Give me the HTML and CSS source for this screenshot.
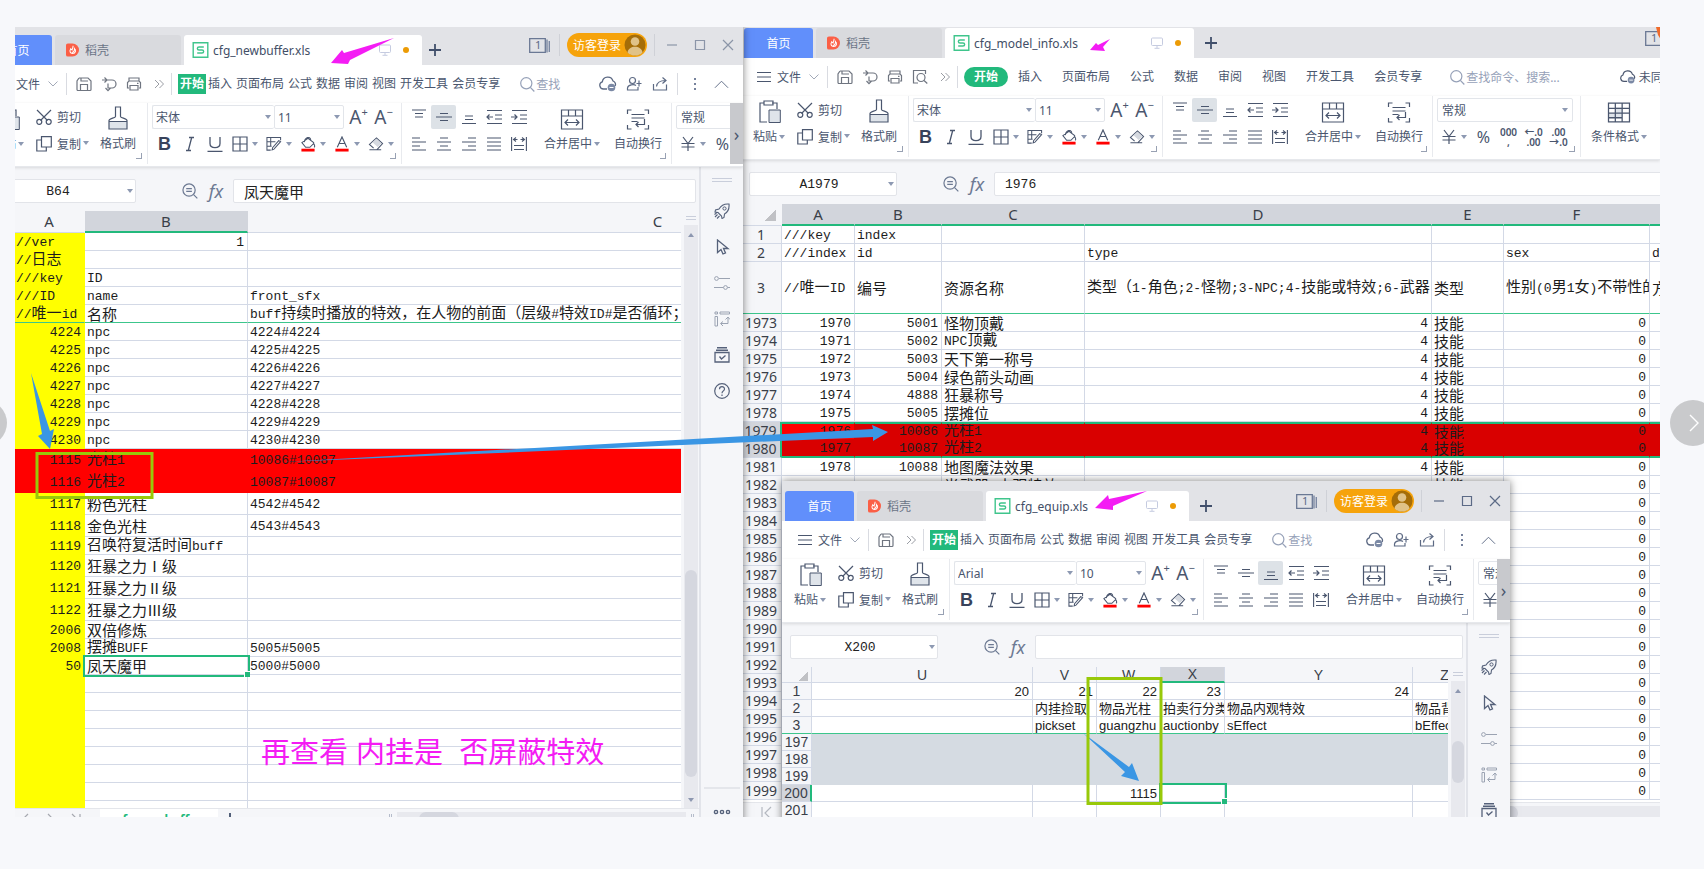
FILE: index.html
```html
<!DOCTYPE html>
<html lang="zh-CN">
<head>
<meta charset="utf-8">
<title>cfg_newbuffer.xls</title>
<link rel="stylesheet" href="styles.css">
</head>
<body>
<svg class="defs" aria-hidden="true">
  <symbol id="docer" viewBox="0 0 14 14"><path d="M0 2a2 2 0 0 1 2-2h5a7 7 0 0 1 0 14H2a2 2 0 0 1-2-2z" fill="#fb5f46"/><path d="M7.6 2.4c.2 2-.8 3-1 4.600-1-.4-1.500-1.300-1.500-1.300-1.700 2.500-.6 5 1.900 5 3.600 0 4.200-3.800 1.800-5.300M6.500 9.800C9 9 9.500 7 8.900 4.500" fill="none" stroke="#fff" stroke-width="1.100"/></symbol>
  <symbol id="sheet" viewBox="0 0 16 16"><path d="M.7.7h14.600v14.600H.7zM11.300 5H6.500C4.300 5 4.300 8 6.500 8h3c2.200 0 2.200 3 0 3H4.700" fill="none" stroke="#3fc58c" stroke-width="1.400"/></symbol>
  <symbol id="screen" viewBox="0 0 12 12"><path d="M1.500 1h9a1 1 0 0 1 1 1v5.500a1 1 0 0 1-1 1h-9a1 1 0 0 1-1-1V2a1 1 0 0 1 1-1zM6 8.500V11M3.500 11.300h5" fill="none" stroke="#c5cbe0"/></symbol>
  <symbol id="plus" viewBox="0 0 12 12"><path d="M6 0v12M0 6h12" fill="none" stroke="#414f6b" stroke-width="1.800"/></symbol>
  <symbol id="stack" viewBox="0 0 21 15"><path d="M.7.700h15.600v13.600H.7z" fill="none" stroke="#6a7894" stroke-width="1.300"/><path d="M18 1.500v13M20.300 3v11" stroke="#7c89a3" stroke-width="1.400"/></symbol>
  <symbol id="avatar" viewBox="0 0 22 22"><circle cx="11" cy="11" r="10.500" fill="#a56d08"/><circle cx="11" cy="7.500" r="4.300" fill="#e0c288"/><path d="M3.500 18.400C4.500 10.800 17.500 10.800 18.500 18.400a10.500 10.500 0 0 1-15 0z" fill="#e0c288"/></symbol>
  <symbol id="min" viewBox="0 0 12 12"><path d="M1 6h10" stroke="currentColor" stroke-width="1.200"/></symbol>
  <symbol id="max" viewBox="0 0 12 12"><path d="M1.500 1.500h9v9h-9z" fill="none" stroke="currentColor" stroke-width="1.200"/></symbol>
  <symbol id="close" viewBox="0 0 12 12"><path d="M1 1l10 10M11 1L1 11" stroke="currentColor" stroke-width="1.200"/></symbol>
  <symbol id="menu" viewBox="0 0 14 12"><path d="M0 1.500h14M0 6h14M0 10.500h14" stroke="currentColor" stroke-width="1.100"/></symbol>
  <symbol id="down" viewBox="0 0 10 6"><path d="M.5.500L5 5 9.500.500" fill="none" stroke="currentColor"/></symbol>
  <symbol id="save" viewBox="0 0 16 16"><path d="M3 2h9l3 3v8.500a1 1 0 0 1-1 1H2a1 1 0 0 1-1-1V5l2-3M5 2v3h7M4.500 14.500V8.500h7v6" fill="none" stroke="currentColor" stroke-width="1.200"/></symbol>
  <symbol id="undo" viewBox="0 0 16 16"><path d="M1 4h10a4 4 0 0 1 0 8H7V7.500M3.500 1.500L6 4 3.500 6.500M4.500 12l2.500 2.700L9.500 12" fill="none" stroke="currentColor" stroke-width="1.200"/></symbol>
  <symbol id="print" viewBox="0 0 16 16"><path d="M3 5V2h10v3M3 12H1.500V6.500L3 5h10l1.500 1.500V12H13M4 9.500h8V14H4zM11 7.300h1.500" fill="none" stroke="currentColor" stroke-width="1.200"/></symbol>
  <symbol id="preview" viewBox="0 0 16 16"><path d="M6 14H1.500V1.500h12V5" fill="none" stroke="currentColor" stroke-width="1.200"/><circle cx="9" cy="8.500" r="4" fill="none" stroke="currentColor" stroke-width="1.200"/><path d="M12 11.500l3.300 3" stroke="currentColor" stroke-width="1.200"/></symbol>
  <symbol id="more" viewBox="0 0 10 10"><path d="M1 1l4 4-4 4M5.500 1l4 4-4 4" fill="none" stroke="#9a9da4"/></symbol>
  <symbol id="search" viewBox="0 0 15 15"><circle cx="6.300" cy="6.300" r="5.600" fill="none" stroke="currentColor" stroke-width="1.200"/><path d="M10.300 10.300l4 4.200" stroke="currentColor" stroke-width="1.200"/></symbol>
  <symbol id="cloud" viewBox="0 0 18 16"><path d="M8 13H4.500A3.700 3.700 0 0 1 3.300 5.800 5.500 5.500 0 0 1 14 5c2.500 1 3 3.500 2 5" fill="none" stroke="currentColor" stroke-width="1.300"/><circle cx="12.500" cy="11.500" r="3.800" fill="#7b89a5"/><path d="M10.500 11.500h4" stroke="#fff"/></symbol>
  <symbol id="person" viewBox="0 0 16 16"><circle cx="6.500" cy="4.500" r="3" fill="none" stroke="currentColor" stroke-width="1.200"/><path d="M12 11v3H1.500v-2C2 8.500 8 8 10 9.500M13 4.500v6M10.500 7.500h5" fill="none" stroke="currentColor" stroke-width="1.200"/></symbol>
  <symbol id="share" viewBox="0 0 16 16"><path d="M1.500 8v6h13V8.500M4.500 10.500C5 6.500 8 4.500 13.500 4.500M10.500 1.500l3.500 3-3.500 3" fill="none" stroke="currentColor" stroke-width="1.200"/></symbol>
  <symbol id="dots" viewBox="0 0 4 14"><path d="M1 1h2v2H1zM1 6h2v2H1zM1 11h2v2H1z" fill="#76829c"/></symbol>
  <symbol id="up" viewBox="0 0 16 9"><path d="M1 8l7-7 7 7" fill="none" stroke="currentColor"/></symbol>
  <symbol id="paste" viewBox="0 0 22 24"><path d="M8 22H1V3h4M13 3h5v6M5 1h9v4H5z" fill="none" stroke="currentColor" stroke-width="1.200"/><path d="M10 10h11.300v12.500H10z" fill="#dfe4ea" stroke="currentColor"/></symbol>
  <symbol id="cut" viewBox="0 0 16 16"><path d="M1 1l10.500 10.500M15 1L4.500 11.500" stroke="currentColor" stroke-width="1.200"/><circle cx="3.300" cy="12.800" r="2.500" fill="none" stroke="currentColor" stroke-width="1.200"/><circle cx="12.700" cy="12.800" r="2.500" fill="none" stroke="currentColor" stroke-width="1.200"/></symbol>
  <symbol id="copy" viewBox="0 0 16 16"><path d="M5.500.700h9.800V11H5.500zM5.500 4H.8v11h9.500v-4" fill="none" stroke="currentColor" stroke-width="1.200"/></symbol>
  <symbol id="brush" viewBox="0 0 20 24"><path d="M1 15h18v8H1z" fill="#dfe4ea"/><path d="M1 23V14.500c0-2 6.500-2.500 6.500-4V1h5v9.500c0 1.500 6.500 2 6.500 4V23zM1 15.500h18" fill="none" stroke="currentColor" stroke-width="1.200"/></symbol>
  <symbol id="italic" viewBox="0 0 16 16"><path d="M7 1.500h5M4 14.500h5M9.700 1.500L6.300 14.500" stroke="currentColor" stroke-width="1.300"/></symbol>
  <symbol id="under" viewBox="0 0 16 16"><path d="M3 1v6.500c0 5.500 10 5.500 10 0V1M.5 15.300h15" fill="none" stroke="currentColor" stroke-width="1.300"/></symbol>
  <symbol id="border" viewBox="0 0 16 16"><path d="M1 1h14v14H1zM8 1v14M1 8h14" fill="none" stroke="currentColor" stroke-width="1.200"/></symbol>
  <symbol id="pen" viewBox="0 0 17 16"><path d="M5 14.500H1V1h14.500v3M1 5.500h9M5 1v9.500M1 10.500h5M15.500 5.500l-7 8-2 .700.500-2.200 6.500-7.500z" fill="none" stroke="currentColor" stroke-width="1.100"/></symbol>
  <symbol id="bucket" viewBox="0 0 16 17"><path d="M4 6.500C5 1 10 0 11 4M1.500 7L8 2.500 14 7v1L10 12H5.500zM14 8c1.500 2 1.500 3 .5 4" fill="none" stroke="currentColor" stroke-width="1.100"/><path d="M1 13.500h14v3H1z" fill="#f00"/></symbol>
  <symbol id="fontcolor" viewBox="0 0 16 17"><path d="M3 12L8 1l5 11M4.800 8h6.400" fill="none" stroke="currentColor" stroke-width="1.200"/><path d="M1 13.500h14v3H1z" fill="#f00"/></symbol>
  <symbol id="eraser" viewBox="0 0 17 16"><path d="M6 12.500L1.500 8.500 9 1.500l6.500 6-6 6.500H1.500M9 14h5" fill="none" stroke="currentColor" stroke-width="1.100"/><path d="M9 2.500l5.300 5-4 3.800L5 6.500z" fill="#d5d9e0"/></symbol>
  <symbol id="vtop" viewBox="0 0 16 16"><path d="M1 1h14M4 4.500h8M4 8h8" stroke="currentColor" stroke-width="1.200"/></symbol>
  <symbol id="vmid" viewBox="0 0 16 16"><path d="M4 4.500h8M0 8h16M4 11.500h8" stroke="currentColor" stroke-width="1.200"/></symbol>
  <symbol id="vbot" viewBox="0 0 16 16"><path d="M4 7h8M4 10.500h8M1 14.500h14" stroke="currentColor" stroke-width="1.200"/></symbol>
  <symbol id="outd" viewBox="0 0 16 16"><path d="M1 1.500h15M9 6h7M9 10h7M1 14.500h15M7 8H1M3.500 5.500L1 8l2.500 2.500" fill="none" stroke="currentColor" stroke-width="1.200"/></symbol>
  <symbol id="ind" viewBox="0 0 16 16"><path d="M1 1.500h15M9 6h7M9 10h7M1 14.500h15M0 8h6M3.500 5.500L6 8l-2.500 2.500" fill="none" stroke="currentColor" stroke-width="1.200"/></symbol>
  <symbol id="hl" viewBox="0 0 16 16"><path d="M1 2h8M1 6h14M1 10h8M1 14h14" stroke="currentColor" stroke-width="1.200"/></symbol>
  <symbol id="hc" viewBox="0 0 16 16"><path d="M4 2h8M1 6h14M4 10h8M1 14h14" stroke="currentColor" stroke-width="1.200"/></symbol>
  <symbol id="hr" viewBox="0 0 16 16"><path d="M7 2h8M1 6h14M7 10h8M1 14h14" stroke="currentColor" stroke-width="1.200"/></symbol>
  <symbol id="hj" viewBox="0 0 16 16"><path d="M1 2h14M1 6h14M1 10h14M1 14h14" stroke="currentColor" stroke-width="1.200"/></symbol>
  <symbol id="dist" viewBox="0 0 16 16"><path d="M.6 1v14M15.400 1v14M3 9.500h10M3 13.500h10M2.500 3.500h4M5 1.500l-2.500 2L5 5.500M13.500 3.500h-4M11 1.500l2.500 2-2.500 2" fill="none" stroke="currentColor" stroke-width="1.100"/></symbol>
  <symbol id="merge" viewBox="0 0 23 21"><path d="M1 1h21v19H1zM1 7h21M8 1v6M15 1v6M4.500 13.500h14M7.500 10.500l-3 3 3 3M15.500 10.500l3 3-3 3" fill="none" stroke="currentColor" stroke-width="1.200"/></symbol>
  <symbol id="wrap" viewBox="0 0 23 21"><path d="M5 1H1v4M18 1h4v4M1 16v4h4M22 16v4h-4M5 5.500h13M5 9h13M5 12.500h6M18 10v5.500H9.500M12 13l-2.500 2.500L12 18" fill="none" stroke="currentColor" stroke-width="1.200"/></symbol>
  <symbol id="cond" viewBox="0 0 22 20"><path d="M1 11h13v4H1zM8 5h6v6H8z" fill="#dfe4ea"/><path d="M1 1h20v18H1zM1 6h20M1 10.500h20M1 15h13M7.500 1v18M14 1v18" fill="none" stroke="currentColor" stroke-width="1.200"/></symbol>
  <symbol id="yen" viewBox="0 0 16 16"><path d="M3 1l5 6.500L13 1M8 7.500V15M1.500 7.500h13M1.500 11h13" fill="none" stroke="currentColor" stroke-width="1.200"/></symbol>
  <symbol id="zoomout" viewBox="0 0 17 17"><circle cx="7.500" cy="7.500" r="6.500" fill="none" stroke="currentColor" stroke-width="1.300"/><path d="M12.300 12.300l4 4M4.500 6h6M4.500 9h6" stroke="currentColor" stroke-width="1.300"/></symbol>
  <symbol id="rocket" viewBox="0 0 16 16"><path d="M15 1C10 .5 7 2.500 5 6L1.500 7 1 9l3 .5L7.500 13l.5 2.500 2-1 .5-3.500C14 9 15.500 6 15 1zM3.500 11.500L1 14M5.500 13L3 15.500M2.500 10L.5 11.500" fill="none" stroke="currentColor" stroke-width="1.100"/><circle cx="10.500" cy="5.500" r="1.600" fill="none" stroke="currentColor"/></symbol>
  <symbol id="cursor" viewBox="0 0 16 16"><path d="M3.500 1v12.500L7 10.500l2 4.500 2.500-1-2-4.500H14z" fill="none" stroke="currentColor" stroke-width="1.300"/></symbol>
  <symbol id="sliders" viewBox="0 0 16 16"><circle cx="2.500" cy="3.500" r="1.900" fill="none" stroke="currentColor"/><circle cx="11.500" cy="12.500" r="1.900" fill="none" stroke="currentColor"/><path d="M5 3.500h11M0 12.500h9.500M13.500 12.500H16" stroke="currentColor"/></symbol>
  <symbol id="swap" viewBox="0 0 16 16"><path d="M1 1h2.500v2H1zM6 1h9.500v2H6zM1 5.500h2.500V15H1zM7 12.500h7V6.500M11.500 8.500l2.500-2.500 2 2.500M9 10.500l-2.500 2L9 15" fill="none" stroke="currentColor"/></symbol>
  <symbol id="box" viewBox="0 0 16 16"><path d="M3 .8h10M2 3.300h12" stroke="currentColor" stroke-width="1.500"/><path d="M1 5.500h14V15H1zM5.500 9.500L7.500 12l4-3.500" fill="none" stroke="currentColor" stroke-width="1.300"/></symbol>
  <symbol id="help" viewBox="0 0 16 16"><circle cx="8" cy="8" r="7.300" fill="none" stroke="currentColor" stroke-width="1.200"/><path d="M5.500 6.200c0-3.400 5-3.400 5-.2 0 1.800-2.500 2-2.500 4.200M8 11.500V13" fill="none" stroke="currentColor" stroke-width="1.200"/></symbol>
</svg>

<main class="stage">

  <section class="window buffer" aria-label="cfg_newbuffer.xls">
    <header class="titlebar">
      <button class="tab home">首页</button>
      <button class="tab docer"><svg><use href="#docer"/></svg>稻壳</button>
      <div class="tab active"><svg class="i16"><use href="#sheet"/></svg><span>cfg_newbuffer.xls</span><svg class="scr"><use href="#screen"/></svg><i class="dot"></i></div>
      <button class="add" aria-label="新建"><svg><use href="#plus"/></svg></button>
      <div class="controls">
        <button class="count"><svg><use href="#stack"/></svg><span>1</span></button><i class="sep"></i>
        <button class="login">访客登录<svg><use href="#avatar"/></svg></button><i class="sep"></i>
        <button class="wc" aria-label="最小化"><svg><use href="#min"/></svg></button><button class="wc" aria-label="最大化"><svg><use href="#max"/></svg></button><button class="wc" aria-label="关闭"><svg><use href="#close"/></svg></button>
      </div>
    </header>
    <nav class="menu">
      <button class="file"><svg class="ham"><use href="#menu"/></svg>文件<svg class="chev"><use href="#down"/></svg></button><i class="sep"></i>
      <button class="q" aria-label="保存"><svg><use href="#save"/></svg></button><button class="q" aria-label="撤销"><svg><use href="#undo"/></svg></button><button class="q" aria-label="打印"><svg><use href="#print"/></svg></button><button class="q" aria-label="更多"><svg class="i10"><use href="#more"/></svg></button><i class="sep"></i>
      <div class="items"><button class="on">开始</button><button>插入</button><button>页面布局</button><button>公式</button><button>数据</button><button>审阅</button><button>视图</button><button>开发工具</button><button>会员专享</button></div>
      <button class="find"><svg><use href="#search"/></svg>查找</button>
      <div class="acts"><button aria-label="云"><svg class="i18"><use href="#cloud"/></svg></button><button aria-label="协作"><svg><use href="#person"/></svg></button><button aria-label="分享"><svg><use href="#share"/></svg></button><i class="sep"></i><button aria-label="选项"><svg><use href="#dots"/></svg></button><button aria-label="收起"><svg><use href="#up"/></svg></button></div>
    </nav>
    <div class="ribbon">
      <div class="groups">
        <div class="group clip">
          <button class="big"><svg class="pasteicon"><use href="#paste"/></svg><span class="dd">粘贴</span></button>
          <div class="col"><button class="lab"><svg><use href="#cut"/></svg>剪切</button><button class="lab"><svg><use href="#copy"/></svg><span class="dd">复制</span></button></div>
          <button class="big"><svg class="brushicon"><use href="#brush"/></svg><span>格式刷</span></button>
        </div>
        <div class="group font">
          <div class="line"><label class="combo face"><select aria-label="字体"><option>宋体</option></select></label><label class="combo size"><select aria-label="字号"><option>11</option></select></label><button class="t">A<sup>+</sup></button><button class="t">A<sup>−</sup></button></div>
          <div class="line"><button class="t bold">B</button><button class="t"><svg><use href="#italic"/></svg></button><button class="t"><svg><use href="#under"/></svg></button><button class="drop dd"><svg><use href="#border"/></svg></button><button class="drop dd"><svg><use href="#pen"/></svg></button><button class="drop dd"><svg><use href="#bucket"/></svg></button><button class="drop dd"><svg><use href="#fontcolor"/></svg></button><button class="drop dd"><svg><use href="#eraser"/></svg></button></div>
        </div>
        <div class="group align">
          <div class="pad"><button><svg><use href="#vtop"/></svg></button><button class="sel"><svg><use href="#vmid"/></svg></button><button><svg><use href="#vbot"/></svg></button><button><svg><use href="#outd"/></svg></button><button><svg><use href="#ind"/></svg></button><button><svg><use href="#hl"/></svg></button><button><svg><use href="#hc"/></svg></button><button><svg><use href="#hr"/></svg></button><button><svg><use href="#hj"/></svg></button><button><svg><use href="#dist"/></svg></button></div>
          <button class="big wide"><svg class="mergeicon"><use href="#merge"/></svg><span class="dd">合并居中</span></button>
          <button class="big wraptext"><svg class="mergeicon"><use href="#wrap"/></svg><span>自动换行</span></button>
        </div>
        <div class="group num">
          <div class="line"><label class="combo fmt"><select aria-label="数字格式"><option>常规</option></select></label></div>
          <div class="line"><button class="drop dd" aria-label="货币"><svg><use href="#yen"/></svg></button><button class="t pct">%</button></div>
        </div>
      </div>
      <button class="scroll" aria-label="更多功能">›</button>
    </div>
    <div class="body">
      <div class="work">
        <div class="fbar"><label class="namebox"><input aria-label="名称框" value="B64"></label><button aria-label="缩小"><svg><use href="#zoomout"/></svg></button><button class="fx">fx</button><input class="formula zh" aria-label="编辑栏" value="凤天魔甲"></div>
        <div class="gridrow">
          <div class="grid">
            <table>
              <colgroup><col class="a"><col class="b"><col class="c"></colgroup>
              <thead><tr><th>A</th><th class="hot">B</th><th>C</th></tr></thead>
              <tbody>
                <tr><td>//ver</td><td class="r">1</td><td></td></tr>
                <tr><td>//<span class="zh">日志</span></td><td></td><td></td></tr>
                <tr><td>///key</td><td>ID</td><td></td></tr>
                <tr><td>///ID</td><td>name</td><td>front_sfx</td></tr>
                <tr class="freeze"><td>//<span class="zh">唯一</span>id</td><td class="zh">名称</td><td>buff<span class="zh">持续时播放的特效，在人物的前面（层级</span>#<span class="zh">特效</span>ID#<span class="zh">是否循环；</span></td></tr>
                <tr><td class="r">4224</td><td>npc</td><td>4224#4224</td></tr>
                <tr><td class="r">4225</td><td>npc</td><td>4225#4225</td></tr>
                <tr><td class="r">4226</td><td>npc</td><td>4226#4226</td></tr>
                <tr><td class="r">4227</td><td>npc</td><td>4227#4227</td></tr>
                <tr><td class="r">4228</td><td>npc</td><td>4228#4228</td></tr>
                <tr><td class="r">4229</td><td>npc</td><td>4229#4229</td></tr>
                <tr><td class="r">4230</td><td>npc</td><td>4230#4230</td></tr>
                <tr class="tall red"><td class="r">1115</td><td><span class="zh">光柱</span>1</td><td>10086#10087</td></tr>
                <tr class="tall red"><td class="r">1116</td><td><span class="zh">光柱</span>2</td><td>10087#10087</td></tr>
                <tr class="tall"><td class="r">1117</td><td class="zh">粉色光柱</td><td>4542#4542</td></tr>
                <tr class="tall"><td class="r">1118</td><td class="zh">金色光柱</td><td>4543#4543</td></tr>
                <tr><td class="r">1119</td><td><span class="zh">召唤符复活时间</span>buff</td><td></td></tr>
                <tr class="tall"><td class="r">1120</td><td class="zh">狂暴之力Ⅰ级</td><td></td></tr>
                <tr class="tall"><td class="r">1121</td><td class="zh">狂暴之力Ⅱ级</td><td></td></tr>
                <tr class="tall"><td class="r">1122</td><td class="zh">狂暴之力Ⅲ级</td><td></td></tr>
                <tr><td class="r">2006</td><td class="zh">双倍修炼</td><td></td></tr>
                <tr><td class="r">2008</td><td><span class="zh">摆摊</span>BUFF</td><td>5005#5005</td></tr>
                <tr><td class="r">50</td><td class="zh cursor">凤天魔甲</td><td>5000#5000</td></tr>
                <tr><td></td><td></td><td></td></tr><tr><td></td><td></td><td></td></tr><tr><td></td><td></td><td></td></tr><tr><td></td><td></td><td></td></tr>
                <tr><td></td><td></td><td></td></tr><tr><td></td><td></td><td></td></tr><tr><td></td><td></td><td></td></tr><tr><td></td><td></td><td></td></tr>
              </tbody>
            </table>
          </div>
          <div class="vscroll"><i class="grip"></i><div class="track"><i class="arr"></i><i class="thumb"></i><i class="arr dn"></i></div></div>
        </div>
        <footer class="sheets"><span class="nav"><svg><path d="M9 5L4 10l5 5M29 5l5 5-5 5M53 5l5 5-5 5M61 5v10" fill="none" stroke="#a6a9b0" stroke-width="1.200"/></svg></span><button class="stab">cfg_newbuffer</button><button class="sadd"><svg><use href="#plus"/></svg></button><i class="split"></i><span class="htrack"><i></i></span><i class="split end"></i></footer>
      </div>
      <aside class="side"><i class="grip"></i><button><svg><use href="#rocket"/></svg></button><button><svg><use href="#cursor"/></svg></button><button class="dim"><svg><use href="#sliders"/></svg></button><button class="dim"><svg><use href="#swap"/></svg></button><button><svg><use href="#box"/></svg></button><button><svg><use href="#help"/></svg></button><button class="rest"><svg viewBox="0 0 18 16"><g fill="none" stroke="#55617a" stroke-width="1.400"><circle cx="3" cy="8" r="1.600"/><circle cx="9" cy="8" r="1.600"/><circle cx="15" cy="8" r="1.600"/></g></svg></button></aside>
    </div>
  </section>

  <section class="window model" aria-label="cfg_model_info.xls">
    <header class="titlebar">
      <button class="tab home">首页</button>
      <button class="tab docer"><svg><use href="#docer"/></svg>稻壳</button>
      <div class="tab active"><svg class="i16"><use href="#sheet"/></svg><span>cfg_model_info.xls</span><svg class="scr"><use href="#screen"/></svg><i class="dot"></i></div>
      <button class="add" aria-label="新建"><svg><use href="#plus"/></svg></button>
      <div class="controls"><button class="count"><svg><use href="#stack"/></svg><span>1</span></button></div>
      <svg class="flag"><path d="M0 0h5v13L2 8z" fill="#f06a2a"/></svg>
    </header>
    <nav class="menu">
      <button class="file"><svg class="ham"><use href="#menu"/></svg>文件<svg class="chev"><use href="#down"/></svg></button><i class="sep"></i>
      <button class="q" aria-label="保存"><svg><use href="#save"/></svg></button><button class="q" aria-label="撤销"><svg><use href="#undo"/></svg></button><button class="q" aria-label="打印"><svg><use href="#print"/></svg></button><button class="q" aria-label="预览"><svg><use href="#preview"/></svg></button><button class="q" aria-label="更多"><svg class="i10"><use href="#more"/></svg></button><i class="sep"></i>
      <div class="items"><button class="on">开始</button><button>插入</button><button>页面布局</button><button>公式</button><button>数据</button><button>审阅</button><button>视图</button><button>开发工具</button><button>会员专享</button></div>
      <button class="find"><svg><use href="#search"/></svg>查找命令、搜索...</button>
      <button class="sync"><svg><use href="#cloud"/></svg>未同步</button>
    </nav>
    <div class="ribbon">
      <div class="groups">
        <div class="group clip">
          <button class="big"><svg class="pasteicon"><use href="#paste"/></svg><span class="dd">粘贴</span></button>
          <div class="col"><button class="lab"><svg><use href="#cut"/></svg>剪切</button><button class="lab"><svg><use href="#copy"/></svg><span class="dd">复制</span></button></div>
          <button class="big"><svg class="brushicon"><use href="#brush"/></svg><span>格式刷</span></button>
        </div>
        <div class="group font">
          <div class="line"><label class="combo face"><select aria-label="字体"><option>宋体</option></select></label><label class="combo size"><select aria-label="字号"><option>11</option></select></label><button class="t">A<sup>+</sup></button><button class="t">A<sup>−</sup></button></div>
          <div class="line"><button class="t bold">B</button><button class="t"><svg><use href="#italic"/></svg></button><button class="t"><svg><use href="#under"/></svg></button><button class="drop dd"><svg><use href="#border"/></svg></button><button class="drop dd"><svg><use href="#pen"/></svg></button><button class="drop dd"><svg><use href="#bucket"/></svg></button><button class="drop dd"><svg><use href="#fontcolor"/></svg></button><button class="drop dd"><svg><use href="#eraser"/></svg></button></div>
        </div>
        <div class="group align">
          <div class="pad"><button><svg><use href="#vtop"/></svg></button><button class="sel"><svg><use href="#vmid"/></svg></button><button><svg><use href="#vbot"/></svg></button><button><svg><use href="#outd"/></svg></button><button><svg><use href="#ind"/></svg></button><button><svg><use href="#hl"/></svg></button><button><svg><use href="#hc"/></svg></button><button><svg><use href="#hr"/></svg></button><button><svg><use href="#hj"/></svg></button><button><svg><use href="#dist"/></svg></button></div>
          <button class="big wide"><svg class="mergeicon"><use href="#merge"/></svg><span class="dd">合并居中</span></button>
          <button class="big wraptext"><svg class="mergeicon"><use href="#wrap"/></svg><span>自动换行</span></button>
        </div>
        <div class="group num">
          <div class="line"><label class="combo fmt"><select aria-label="数字格式"><option>常规</option></select></label></div>
          <div class="line"><button class="drop dd" aria-label="货币"><svg><use href="#yen"/></svg></button><button class="t pct">%</button><button class="digits">000<br>,</button><button class="digits">←.0<br>.00</button><button class="digits">.00<br>→.0</button></div>
        </div>
        <div class="group cond">
          <button class="big wide"><svg class="mergeicon"><use href="#cond"/></svg><span class="dd">条件格式</span></button>
          <div class="col"><button class="lab"><svg><use href="#border"/></svg></button><button class="lab"><svg><use href="#hj"/></svg></button></div>
        </div>
      </div>
    </div>
    <div class="body">
      <div class="work">
        <div class="fbar"><label class="namebox"><input aria-label="名称框" value="A1979"></label><button aria-label="缩小"><svg><use href="#zoomout"/></svg></button><button class="fx">fx</button><input class="formula" aria-label="编辑栏" value="1976"></div>
        <div class="gridrow"><div class="grid">
          <table>
            <colgroup><col class="n"><col class="a"><col class="b"><col class="c"><col class="d"><col class="e"><col class="f"><col class="g"></colgroup>
            <thead><tr><th class="corner"></th><th>A</th><th>B</th><th>C</th><th>D</th><th>E</th><th>F</th><th></th></tr></thead>
            <tbody>
              <tr><th>1</th><td>///key</td><td>index</td><td></td><td></td><td></td><td></td><td></td></tr>
              <tr><th>2</th><td>///index</td><td>id</td><td></td><td>type</td><td></td><td>sex</td><td>d</td></tr>
              <tr class="freeze head3"><th>3</th><td>//<span class="zh">唯一</span>ID</td><td class="zh">编号</td><td class="zh">资源名称</td><td><span class="zh">类型（</span>1-<span class="zh">角色</span>;2-<span class="zh">怪物</span>;3-NPC;4-<span class="zh">技能或特效</span>;6-<span class="zh">武器</span></td><td class="zh">类型</td><td><span class="zh">性别</span>(0<span class="zh">男</span>1<span class="zh">女</span>)<span class="zh">不带性的</span></td><td class="zh">方</td></tr>
              <tr><th>1973</th><td class="r">1970</td><td class="r">5001</td><td class="zh">怪物顶戴</td><td class="r">4</td><td class="zh">技能</td><td class="r">0</td><td></td></tr>
              <tr><th>1974</th><td class="r">1971</td><td class="r">5002</td><td>NPC<span class="zh">顶戴</span></td><td class="r">4</td><td class="zh">技能</td><td class="r">0</td><td></td></tr>
              <tr><th>1975</th><td class="r">1972</td><td class="r">5003</td><td class="zh">天下第一称号</td><td class="r">4</td><td class="zh">技能</td><td class="r">0</td><td></td></tr>
              <tr><th>1976</th><td class="r">1973</td><td class="r">5004</td><td class="zh">绿色箭头动画</td><td class="r">4</td><td class="zh">技能</td><td class="r">0</td><td></td></tr>
              <tr><th>1977</th><td class="r">1974</td><td class="r">4888</td><td class="zh">狂暴称号</td><td class="r">4</td><td class="zh">技能</td><td class="r">0</td><td></td></tr>
              <tr><th>1978</th><td class="r">1975</td><td class="r">5005</td><td class="zh">摆摊位</td><td class="r">4</td><td class="zh">技能</td><td class="r">0</td><td></td></tr>
              <tr class="picked first"><th>1979</th><td class="r">1976</td><td class="r">10086</td><td><span class="zh">光柱</span>1</td><td class="r">4</td><td class="zh">技能</td><td class="r">0</td><td></td></tr>
              <tr class="picked last"><th>1980</th><td class="r">1977</td><td class="r">10087</td><td><span class="zh">光柱</span>2</td><td class="r">4</td><td class="zh">技能</td><td class="r">0</td><td></td></tr>
              <tr><th>1981</th><td class="r">1978</td><td class="r">10088</td><td class="zh">地图魔法效果</td><td class="r">4</td><td class="zh">技能</td><td class="r">0</td><td></td></tr>
              <tr><th>1982</th><td></td><td></td><td class="zh">光武器_内观特效</td><td></td><td class="zh">技能</td><td class="r">0</td><td></td></tr>
              <tr><th>1983</th><td></td><td></td><td></td><td></td><td></td><td class="r">0</td><td></td></tr>
              <tr><th>1984</th><td></td><td></td><td></td><td></td><td></td><td class="r">0</td><td></td></tr>
              <tr><th>1985</th><td></td><td></td><td></td><td></td><td></td><td class="r">0</td><td></td></tr>
              <tr><th>1986</th><td></td><td></td><td></td><td></td><td></td><td class="r">0</td><td></td></tr>
              <tr><th>1987</th><td></td><td></td><td></td><td></td><td></td><td class="r">0</td><td></td></tr>
              <tr><th>1988</th><td></td><td></td><td></td><td></td><td></td><td class="r">0</td><td></td></tr>
              <tr><th>1989</th><td></td><td></td><td></td><td></td><td></td><td class="r">0</td><td></td></tr>
              <tr><th>1990</th><td></td><td></td><td></td><td></td><td></td><td class="r">0</td><td></td></tr>
              <tr><th>1991</th><td></td><td></td><td></td><td></td><td></td><td class="r">0</td><td></td></tr>
              <tr><th>1992</th><td></td><td></td><td></td><td></td><td></td><td class="r">0</td><td></td></tr>
              <tr><th>1993</th><td></td><td></td><td></td><td></td><td></td><td class="r">0</td><td></td></tr>
              <tr><th>1994</th><td></td><td></td><td></td><td></td><td></td><td class="r">0</td><td></td></tr>
              <tr><th>1995</th><td></td><td></td><td></td><td></td><td></td><td class="r">0</td><td></td></tr>
              <tr><th>1996</th><td></td><td></td><td></td><td></td><td></td><td class="r">0</td><td></td></tr>
              <tr><th>1997</th><td></td><td></td><td></td><td></td><td></td><td class="r">0</td><td></td></tr>
              <tr><th>1998</th><td></td><td></td><td></td><td></td><td></td><td class="r">0</td><td></td></tr>
              <tr><th>1999</th><td></td><td></td><td></td><td></td><td></td><td class="r">0</td><td></td></tr>
            </tbody>
          </table>
        </div></div>
        <footer class="sheets"><span class="nav"><svg><path d="M17 4v12M26 4l-6 6 6 6" fill="none" stroke="#b4b8c0" stroke-width="1.200"/></svg></span><span class="htrack"><i></i></span></footer>
      </div>
    </div>
  </section>

  <section class="window equip" aria-label="cfg_equip.xls">
    <header class="titlebar">
      <button class="tab home">首页</button>
      <button class="tab docer"><svg><use href="#docer"/></svg>稻壳</button>
      <div class="tab active"><svg class="i16"><use href="#sheet"/></svg><span>cfg_equip.xls</span><svg class="scr"><use href="#screen"/></svg><i class="dot"></i></div>
      <button class="add" aria-label="新建"><svg><use href="#plus"/></svg></button>
      <div class="controls">
        <button class="count"><svg><use href="#stack"/></svg><span>1</span></button><i class="sep"></i>
        <button class="login">访客登录<svg><use href="#avatar"/></svg></button><i class="sep"></i>
        <button class="wc" aria-label="最小化"><svg><use href="#min"/></svg></button><button class="wc" aria-label="最大化"><svg><use href="#max"/></svg></button><button class="wc" aria-label="关闭"><svg><use href="#close"/></svg></button>
      </div>
    </header>
    <nav class="menu">
      <button class="file"><svg class="ham"><use href="#menu"/></svg>文件<svg class="chev"><use href="#down"/></svg></button><i class="sep"></i>
      <button class="q" aria-label="保存"><svg><use href="#save"/></svg></button><button class="q" aria-label="更多"><svg class="i10"><use href="#more"/></svg></button><i class="sep"></i>
      <div class="items"><button class="on">开始</button><button>插入</button><button>页面布局</button><button>公式</button><button>数据</button><button>审阅</button><button>视图</button><button>开发工具</button><button>会员专享</button></div>
      <button class="find"><svg><use href="#search"/></svg>查找</button>
      <div class="acts"><button aria-label="云"><svg class="i18"><use href="#cloud"/></svg></button><button aria-label="协作"><svg><use href="#person"/></svg></button><button aria-label="分享"><svg><use href="#share"/></svg></button><i class="sep"></i><button aria-label="选项"><svg><use href="#dots"/></svg></button><button aria-label="收起"><svg><use href="#up"/></svg></button></div>
    </nav>
    <div class="ribbon">
      <div class="groups">
        <div class="group clip">
          <button class="big"><svg class="pasteicon"><use href="#paste"/></svg><span class="dd">粘贴</span></button>
          <div class="col"><button class="lab"><svg><use href="#cut"/></svg>剪切</button><button class="lab"><svg><use href="#copy"/></svg><span class="dd">复制</span></button></div>
          <button class="big"><svg class="brushicon"><use href="#brush"/></svg><span>格式刷</span></button>
        </div>
        <div class="group font">
          <div class="line"><label class="combo face"><select aria-label="字体"><option>Arial</option></select></label><label class="combo size"><select aria-label="字号"><option>10</option></select></label><button class="t">A<sup>+</sup></button><button class="t">A<sup>−</sup></button></div>
          <div class="line"><button class="t bold">B</button><button class="t"><svg><use href="#italic"/></svg></button><button class="t"><svg><use href="#under"/></svg></button><button class="drop dd"><svg><use href="#border"/></svg></button><button class="drop dd"><svg><use href="#pen"/></svg></button><button class="drop dd"><svg><use href="#bucket"/></svg></button><button class="drop dd"><svg><use href="#fontcolor"/></svg></button><button class="drop dd"><svg><use href="#eraser"/></svg></button></div>
        </div>
        <div class="group align">
          <div class="pad"><button><svg><use href="#vtop"/></svg></button><button><svg><use href="#vmid"/></svg></button><button class="sel"><svg><use href="#vbot"/></svg></button><button><svg><use href="#outd"/></svg></button><button><svg><use href="#ind"/></svg></button><button><svg><use href="#hl"/></svg></button><button><svg><use href="#hc"/></svg></button><button><svg><use href="#hr"/></svg></button><button><svg><use href="#hj"/></svg></button><button><svg><use href="#dist"/></svg></button></div>
          <button class="big wide"><svg class="mergeicon"><use href="#merge"/></svg><span class="dd">合并居中</span></button>
          <button class="big wraptext"><svg class="mergeicon"><use href="#wrap"/></svg><span>自动换行</span></button>
        </div>
        <div class="group num">
          <div class="line"><label class="combo fmt"><select aria-label="数字格式"><option>常规</option></select></label></div>
          <div class="line"><button class="drop dd" aria-label="货币"><svg><use href="#yen"/></svg></button></div>
        </div>
      </div>
      <button class="scroll" aria-label="更多功能">›</button>
    </div>
    <div class="body">
      <div class="work">
        <div class="fbar"><label class="namebox"><input aria-label="名称框" value="X200"></label><button aria-label="缩小"><svg><use href="#zoomout"/></svg></button><button class="fx">fx</button><input class="formula" aria-label="编辑栏" value=""></div>
        <div class="gridrow">
          <div class="grid">
            <table>
              <colgroup><col class="n"><col class="u"><col class="v"><col class="v"><col class="v"><col class="y"><col class="v"></colgroup>
              <thead><tr><th class="corner"></th><th>U</th><th>V</th><th>W</th><th class="hot">X</th><th>Y</th><th>Z</th></tr></thead>
              <tbody>
                <tr><th>1</th><td class="r">20</td><td class="r">21</td><td class="r">22</td><td class="r">23</td><td class="r">24</td><td></td></tr>
                <tr><th>2</th><td></td><td>内挂捡取</td><td>物品光柱</td><td>拍卖行分类</td><td>物品内观特效</td><td>物品背包</td></tr>
                <tr class="freeze"><th>3</th><td></td><td>pickset</td><td>guangzhu</td><td>auctionby</td><td>sEffect</td><td>bEffect</td></tr>
                <tr class="gray"><th>197</th><td></td><td></td><td></td><td></td><td></td><td></td></tr>
                <tr class="gray"><th>198</th><td></td><td></td><td></td><td></td><td></td><td></td></tr>
                <tr class="gray"><th>199</th><td></td><td></td><td></td><td></td><td></td><td></td></tr>
                <tr><th class="hot">200</th><td></td><td></td><td class="r">1115</td><td class="cursor"></td><td></td><td></td></tr>
                <tr><th>201</th><td></td><td></td><td></td><td></td><td></td><td></td></tr>
              </tbody>
            </table>
          </div>
          <div class="vscroll"><i class="grip"></i><div class="track"><i class="arr"></i><i class="thumb"></i></div></div>
        </div>
      </div>
      <aside class="side"><i class="grip"></i><button><svg><use href="#rocket"/></svg></button><button><svg><use href="#cursor"/></svg></button><button class="dim"><svg><use href="#sliders"/></svg></button><button class="dim"><svg><use href="#swap"/></svg></button><button><svg><use href="#box"/></svg></button></aside>
    </div>
  </section>

  <svg class="marks" aria-hidden="true">
    <g transform="translate(-15 -27)">
      <g fill="#f41cf4">
        <path d="M331 63L342 50 344 53 394 38 350 60 348 64z"/>
        <path d="M1090 50L1096 43 1098 45 1110 39 1103 47 1105 51z"/>
        <path d="M1095 508L1108 495 1109 499 1147 491 1113 506 1113 510z"/>
      </g>
      <g fill="#3a96e4">
        <path d="M31 373L50 431 54 429 50 449 38 436 42 434z"/>
        <path d="M283 462L873 429 872 425 888 432 873 441 873 437z"/>
        <path d="M1083 733L1129 767 1132 763 1139 781 1121 776 1125 772z"/>
      </g>
      <g fill="none" stroke="#98c90a" stroke-width="3">
        <path d="M37 453.500h115v44H37z"/>
        <path d="M1088 678.500h73v125h-73z"/>
      </g>
    </g>
  </svg>
  <p class="note">再查看 内挂是&nbsp; 否屏蔽特效</p>
</main>
<button class="pager prev" aria-label="上一张"></button>
<button class="pager next" aria-label="下一张"><svg><path d="M7 2l8 8-8 8" fill="none" stroke="#fff" stroke-width="1.400"/></svg></button>
</body>
</html>
```
FILE: styles.css
```css
* { box-sizing: border-box; }
body {
  margin: 0;
  height: 100vh;
  overflow: hidden;
  background: #f7f8fb;
  padding: 27px 44px 52px 15px;
  font: 12px "Noto Sans", "Noto Sans CJK SC", sans-serif;
  color: #4a566e;
}
.defs { position: absolute; width: 0; height: 0; }
button { border: 0; background: none; padding: 0; margin: 0; font: inherit; color: inherit; white-space: nowrap; }
input, select { font: inherit; color: inherit; border: 0; outline: 0; background: none; padding: 0; min-width: 0; appearance: none; }
svg { width: 16px; height: 16px; flex: none; display: block; }
.i10 { width: 10px; height: 10px; }
.i18 { width: 18px; }

.stage { position: relative; height: 100%; overflow: hidden; }
.window { position: absolute; top: 0; display: flex; flex-direction: column; background: #f5f6f9; overflow: hidden; }
.buffer { left: -35px; width: 763px; bottom: -20px; z-index: 2; box-shadow: 0 0 8px rgba(0, 0, 0, .5); }
.model { left: 726px; right: 0; bottom: -14px; z-index: 1; }
.equip { left: 767px; top: 454px; width: 728px; bottom: -40px; z-index: 3; box-shadow: 0 0 8px rgba(0, 0, 0, .5); }

/* title bar */
.titlebar { display: flex; align-items: flex-end; height: 38px; padding-left: 3px; background: #e2e3e7; flex: none; }
.model .titlebar { height: 31px; position: relative; }
.equip .titlebar { height: 40px; }
.tab { height: 30px; display: flex; align-items: center; border-radius: 3px 3px 0 0; margin-right: 3px; flex: none; }
.home { width: 69px; justify-content: center; background: #618ffb; color: #fff; }
.docer { width: 126px; padding-left: 11px; gap: 6px; background: #d9dade; color: #6b7486; }
.docer svg { width: 13px; height: 14px; }
.active { width: 238px; padding: 0 13px 0 8px; gap: 4px; background: #fff; margin-right: 0; color: #424e66; }
.model .active { width: 249px; }
.equip .active { width: 203px; }
.i16 { width: 17px; height: 16px; }
.scr { width: 12px; height: 12px; margin-left: auto; margin-right: 8px; }
.dot { width: 6px; height: 6px; border-radius: 50%; background: #ec9b05; }
.add { width: 26px; height: 30px; display: grid; place-items: center; flex: none; }
.model .add, .equip .add { width: 34px; }
.add svg { width: 12px; height: 12px; }
.controls { margin-left: auto; display: flex; align-items: center; height: 40px; padding-right: 1px; color: #8b95a8; }
.model .controls { padding: 0; }
.equip .controls { color: #5c6a86; }
.sep { width: 1px; height: 22px; background: #d9dbe1; flex: none; }
.controls .sep { background: #cfd1d7; }
.count { position: relative; width: 21px; height: 15px; margin-right: 9px; }
.count svg { width: 21px; height: 15px; }
.count span { position: absolute; left: 6px; top: 0; font-size: 11px; line-height: 14px; color: #5c6a86; }
.model .count { width: 15px; margin: 0; overflow: hidden; }
.flag { position: absolute; right: 0; top: 0; width: 4px; height: 13px; }
.login { display: flex; align-items: center; justify-content: space-between; width: 80px; height: 24px; border-radius: 12px; background: #f6a30b; color: #fff; padding: 0 1px 0 6px; margin: 0 7px; }
.login svg { width: 22px; height: 22px; }
.wc { width: 28px; height: 24px; display: grid; place-items: center; }
.wc:nth-of-type(3) { margin-left: 3px; }
.wc svg { width: 12px; height: 12px; }

/* menu row */
.menu { display: flex; align-items: center; height: 38px; padding-left: 16px; background: #fff; flex: none; color: #4a566e; }
.file { display: flex; align-items: center; width: 70px; gap: 6px; flex: none; }
.ham { width: 14px; height: 12px; }
.chev { width: 10px; height: 6px; margin-left: 2px; color: #a2a9b8; }
.menu > .sep { margin-right: 4px; }
.q { width: 25px; display: grid; place-items: center; color: #6f7580; flex: none; }
.items { display: flex; margin-left: 2px; }
.items button { padding: 0 2px; height: 20px; line-height: 20px; }
.items .on { background: #22b97c; color: #fff; font-weight: bold; }
.model .items button { padding: 0 10px; }
.find { display: flex; align-items: center; gap: 1px; margin-left: 18px; color: #96a1b8; }
.find svg { width: 15px; height: 15px; }
.model .items .on { border-radius: 10px; }
.sync { display: flex; align-items: center; gap: 3px; margin-left: 60px; }
.acts { display: flex; align-items: center; margin-left: auto; padding-right: 9px; color: #5d6a84; }
.acts button { width: 26px; display: grid; place-items: center; }
.acts .sep { margin: 0 4px; }
.acts button:nth-of-type(4) svg { width: 4px; height: 14px; }
.acts button:nth-of-type(5) svg { width: 15px; height: 9px; }

/* ribbon */
.ribbon { display: flex; height: 64px; background: #fff; border-bottom: 1px solid #e6e8ec; box-shadow: 0 1px 3px rgba(0, 0, 0, .12); flex: none; position: relative; }
.groups { display: flex; flex: 1; overflow: hidden; min-width: 0; }
.group { position: relative; flex: none; height: 61px; border-right: 1px solid #e8eaee; padding-top: 2px; }
.group::after { content: ""; position: absolute; right: 5px; bottom: 5px; width: 5px; height: 5px; border: solid #98a1b3; border-width: 0 1px 1px 0; }
.clip { display: flex; width: 168px; padding-left: 12px; }
.font { width: 254px; padding-left: 4px; }
.align { width: 270px; padding-left: 4px; display: flex; }
.num { width: 148px; padding-left: 4px; }
.cond { width: 160px; display: flex; border: 0; }
.cond::after { display: none; }
.big { display: flex; flex-direction: column; width: 44px; height: 50px; justify-content: space-between; align-items: flex-start; line-height: 22px; }
.pasteicon { width: 22px; height: 24px; margin: 2px 0 0 6px; }
.brushicon { width: 20px; height: 24px; margin: 1px 0 0 8px; }
.mergeicon { width: 24px; height: 21px; margin: 4px 0 0 16px; }
.big.wide { width: 69px; }
.align .wide { margin-left: 13px; }
.big.wraptext { width: 50px; align-items: center; }
.wraptext .mergeicon { margin-left: 0; }
.cond .wide { margin-left: 10px; }
.col { display: flex; flex-direction: column; gap: 3px; width: 64px; }
.lab { display: flex; align-items: center; gap: 5px; height: 24px; }
.dd { position: relative; }
.dd::after, .combo::after, .namebox::after { content: ""; border: 3px solid transparent; border-top: 4px solid #8d99b2; border-bottom: 0; }
.big .dd::after, .lab .dd::after { position: absolute; left: 100%; top: 9px; margin-left: 2px; }
.lab .dd::after { top: 6px; }
.line { display: flex; align-items: center; height: 24px; margin-bottom: 3px; }
.combo { display: flex; align-items: center; height: 24px; border: 1px solid #e2e5ea; padding: 0 3px; border-radius: 2px; }
.combo select { flex: 1; }
.face { width: 122px; border-right: 0; }
.size { width: 70px; margin-right: 2px; }
.fmt { width: 136px; padding: 0 4px; }
.t { width: 25px; height: 24px; display: grid; place-items: center; font-size: 19px; line-height: 20px; }
.t sup { font-size: 11px; line-height: 8px; vertical-align: 8px; }
.line .t:has(sup) { display: block; }
.bold { font: bold 18px "Liberation Sans", sans-serif; color: #38435b; }
.drop { width: 34px; height: 24px; display: flex; align-items: center; gap: 4px; padding-left: 5px; }
.num .drop { padding-left: 4px; }
.pct { font-size: 16px; }
.digits { width: 25px; font-size: 10px; line-height: 10px; font-weight: 600; }
.pad { display: grid; grid-template-columns: repeat(5, 25px); grid-auto-rows: 24px; row-gap: 3px; }
.pad button { display: grid; place-items: center; border-radius: 2px; }
.pad .sel { background: #dde2e7; }
.scroll { width: 13px; height: 61px; background: #c8c9cd; font-size: 18px; }

/* formula bar */
.body { display: flex; flex: 1; min-height: 0; }
.work { flex: 1; min-width: 0; display: flex; flex-direction: column; }
.fbar { display: flex; align-items: center; height: 44px; padding: 4px 3px 0 8px; flex: none; color: #6d7a93; }
.namebox { display: flex; align-items: center; width: 148px; height: 24px; background: #fff; border: 1px solid #e2e4e9; border-radius: 2px; padding-right: 2px; margin-right: 41px; }
.namebox input { flex: 1; text-align: center; font: 13px "Liberation Mono", monospace; color: #222; }
.fbar button { width: 26px; display: grid; place-items: center; }
.fbar .fx { font: italic 18px "Noto Sans", sans-serif; line-height: 20px; margin-right: 4px; }
.formula { flex: 1; height: 24px; background: #fff; border: 1px solid #e2e4e9; border-radius: 2px; padding: 0 10px; font: 13px "Liberation Mono", monospace; color: #222; }
.formula.zh { font: 15px "Noto Sans CJK SC", sans-serif; }
.model .formula { margin-right: -8px; }

/* cells */
.gridrow { display: flex; flex: 1; min-height: 0; }
.grid { flex: 1; min-width: 0; overflow: hidden; background: #fff; }
.buffer .grid { padding-left: 34px; }
.buffer .grid, .model .grid { font: 13px "Liberation Mono", monospace; color: #1c1c1c; }
.equip .grid { font: 13px "Liberation Sans", "Noto Sans CJK SC", sans-serif; color: #222; }
table { table-layout: fixed; width: 0; border-spacing: 0; }
td { height: 18px; padding: 1px 3px 0 2px; line-height: 15px; border: solid #d3d9e6; border-width: 0 1px 1px 0; overflow: hidden; white-space: nowrap; }
.zh { font-family: "Noto Sans CJK SC", sans-serif; font-size: 15px; }
td.zh { padding-top: 0; }
td span.zh { line-height: 0; }
.r { text-align: right; }
th { font: 14px "Noto Sans", sans-serif; line-height: 15px; padding: 0; color: #3a3f49; background: #f5f6f9; border: solid #d3d9e6; border-width: 0 1px 1px 0; white-space: nowrap; }
thead th { height: 22px; font-size: 15px; border-right-color: transparent; }
thead .hot, .model thead th { background: #d2d5dc; border-bottom: 2px solid #22b97c; }
.corner, .model thead .corner { background: linear-gradient(135deg, transparent 50%, #c0c1c5 50%) no-repeat 24px 6px / 11px 11px #f5f6f9; border-bottom: 1px solid #d3d9e6; }
.freeze > * { border-bottom-color: #3cc68c; }
.buffer col.a { width: 71px; }
.buffer col.b { width: 163px; }
.buffer col.c { width: 820px; }
.buffer td:first-child { background: #ff0; border-color: #ff0; }
.buffer .freeze td:first-child { border-bottom-color: #3cc68c; }
.tall td { height: 22px; }
.buffer .red td { background: #f00; border-color: #f00; }
.cursor { position: relative; overflow: visible; box-shadow: 0 0 0 2px #22b97c; }
.cursor::after { content: ""; position: absolute; right: -3px; bottom: -3px; width: 5px; height: 5px; background: #22b97c; border: 1px solid #fff; border-width: 1px 0 0 1px; }

.model col.n { width: 41px; }
.model col.a { width: 73px; }
.model col.b { width: 87px; }
.model col.c { width: 143px; }
.model col.d { width: 347px; }
.model col.e { width: 72px; }
.model col.f { width: 146px; }
.model col.g { width: 60px; }
.model .head3 td, .model .head3 th { height: 52px; }
.picked td { background: #d90000; border-color: #d90000; }
.picked th { background: #d2d5dc; }
.picked.first td { border-top: 2px solid #22b97c; padding-top: 0; }
.picked.first td:nth-child(2) { background: #f00; }
.picked.last td { border-bottom: 2px solid #22b97c; }
.picked td, .picked th { line-height: 14px; }
.picked th { border-right: 2px solid #22b97c; }

.equip col.n { width: 30px; }
.equip col.u { width: 221px; }
.equip col.v { width: 64px; }
.equip col.y { width: 188px; }
.equip th { font: 14px "Liberation Sans", sans-serif; line-height: 15px; }
.equip thead th { height: 16px; border-right-color: #d3d9e6; line-height: 14px; }
.equip td { height: 17px; }
.equip .corner { background-size: 9px 9px; background-position: 17px 5px; }
.equip .gray td { background: #d5dbe2; border-color: #d5dbe2; }
.equip tbody .hot { background: #d2d5dc; border-right: 2px solid #22b97c; }

/* scroll bars */
.vscroll { width: 14px; margin: 0 1px 0 3px; display: flex; flex-direction: column; }
.grip { display: block; width: 10px; height: 4px; border: solid #c9cedb; border-width: 1px 0; margin: 5px auto; flex: none; }
.track { flex: 1; background: #e8e9ee; display: flex; flex-direction: column; align-items: center; padding: 8px 0 6px; }
.arr { border: 3px solid transparent; border-bottom: 4px solid #8d97b0; border-top: 0; }
.dn { border-top: 4px solid #8d97b0; border-bottom: 0; }
.thumb { width: 12px; border-radius: 6px; background: #d5d7df; margin: auto 0 21px; height: 207px; }
.equip .thumb { height: 42px; margin: 48px 0 0; }
.sheets { display: flex; height: 29px; flex: none; border-top: 1px solid #e4e6eb; background: #f5f6f9; }
.buffer .sheets { padding-left: 35px; }
.nav { width: 85px; }
.nav svg { width: 70px; height: 20px; margin-left: 4px; }
.stab { width: 118px; height: 22px; background: #fff; color: #22b97c; font-weight: bold; line-height: 20px; }
.sadd { width: 26px; padding-left: 6px; height: 20px; }
.sadd svg { width: 12px; height: 12px; }
.split { width: 3px; height: 4px; border: solid #b5bccb; border-width: 0 1px; margin: 5px 5px 0 145px; }
.split.end { margin: 5px 5px 0; }
.htrack { flex: 1; height: 14px; margin-top: 3px; background: #e8e9ee; }
.htrack i { display: block; width: 40px; height: 14px; margin-left: 22px; border-radius: 7px; background: #d5d7df; }
.model .htrack { margin-left: 600px; }
.model .htrack i { margin-left: 52px; }

/* side tool strip */
.side { width: 44px; border-left: 2px solid #e2e4ea; display: flex; flex-direction: column; align-items: center; padding-top: 11px; color: #55617a; flex: none; }
.side .grip { width: 20px; margin: 0 0 11px; }
.side button { height: 36px; width: 36px; display: grid; place-items: center; flex: none; }
.side .dim { color: #9ba3b2; }
.side .rest { margin-top: auto; border-top: 2px solid #e4e6eb; height: 50px; place-items: start center; padding-top: 15px; }
.rest svg { width: 18px; }

/* annotations */
.marks { position: absolute; inset: 0; width: 100%; height: 100%; z-index: 4; }
.note { position: absolute; left: 246px; top: 705px; margin: 0; z-index: 4; font: 29px "Liberation Sans", "Noto Sans CJK SC", sans-serif; line-height: 42px; color: #f41cf4; white-space: nowrap; }

.pager { position: absolute; top: 400px; width: 46px; height: 46px; border-radius: 50%; background: #c9cacc; display: grid; place-items: center; }
.prev { left: -39px; }
.next { right: -12px; }
.pager svg { width: 20px; height: 20px; }
```
